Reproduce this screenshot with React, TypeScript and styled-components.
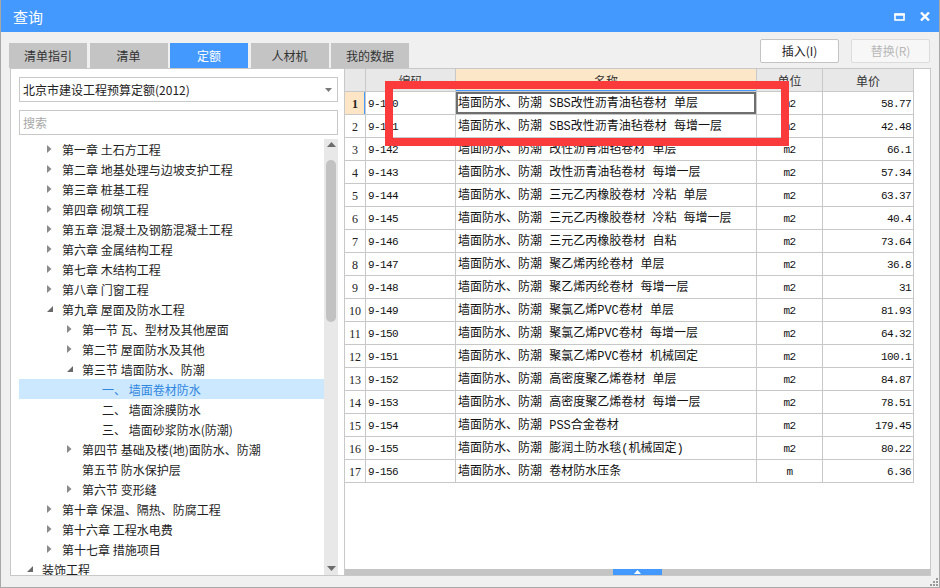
import React from 'react';
import styled, { createGlobalStyle } from 'styled-components';

const UI_FONT = `"Noto Sans CJK SC", "Microsoft YaHei", sans-serif`;
const GRID_FONT = `"Liberation Mono", "Noto Sans CJK SC", monospace`;
const BLUE = '#4499ff';
const LINE = '#c8c8c8';

type TreeNode = { label: string; level: number; state: 'open' | 'closed' | 'leaf'; selected?: boolean };

const treeNodes: TreeNode[] = [
  { label: '第一章 土石方工程', level: 1, state: 'closed' },
  { label: '第二章 地基处理与边坡支护工程', level: 1, state: 'closed' },
  { label: '第三章 桩基工程', level: 1, state: 'closed' },
  { label: '第四章 砌筑工程', level: 1, state: 'closed' },
  { label: '第五章 混凝土及钢筋混凝土工程', level: 1, state: 'closed' },
  { label: '第六章 金属结构工程', level: 1, state: 'closed' },
  { label: '第七章 木结构工程', level: 1, state: 'closed' },
  { label: '第八章 门窗工程', level: 1, state: 'closed' },
  { label: '第九章 屋面及防水工程', level: 1, state: 'open' },
  { label: '第一节 瓦、型材及其他屋面', level: 2, state: 'closed' },
  { label: '第二节 屋面防水及其他', level: 2, state: 'closed' },
  { label: '第三节 墙面防水、防潮', level: 2, state: 'open' },
  { label: '一、 墙面卷材防水', level: 3, state: 'leaf', selected: true },
  { label: '二、 墙面涂膜防水', level: 3, state: 'leaf' },
  { label: '三、 墙面砂浆防水(防潮)', level: 3, state: 'leaf' },
  { label: '第四节 基础及楼(地)面防水、防潮', level: 2, state: 'closed' },
  { label: '第五节 防水保护层', level: 2, state: 'leaf' },
  { label: '第六节 变形缝', level: 2, state: 'closed' },
  { label: '第十章 保温、隔热、防腐工程', level: 1, state: 'closed' },
  { label: '第十六章 工程水电费', level: 1, state: 'closed' },
  { label: '第十七章 措施项目', level: 1, state: 'closed' },
  { label: '装饰工程', level: 0, state: 'open' },
];

const P = '墙面防水、防潮 ';
const rows: [string, string, string, string][] = [
  ['9-140', P + 'SBS改性沥青油毡卷材 单层', 'm2', '58.77'],
  ['9-141', P + 'SBS改性沥青油毡卷材 每增一层', 'm2', '42.48'],
  ['9-142', P + '改性沥青油毡卷材 单层', 'm2', '66.1'],
  ['9-143', P + '改性沥青油毡卷材 每增一层', 'm2', '57.34'],
  ['9-144', P + '三元乙丙橡胶卷材 冷粘 单层', 'm2', '63.37'],
  ['9-145', P + '三元乙丙橡胶卷材 冷粘 每增一层', 'm2', '40.4'],
  ['9-146', P + '三元乙丙橡胶卷材 自粘', 'm2', '73.64'],
  ['9-147', P + '聚乙烯丙纶卷材 单层', 'm2', '36.8'],
  ['9-148', P + '聚乙烯丙纶卷材 每增一层', 'm2', '31'],
  ['9-149', P + '聚氯乙烯PVC卷材 单层', 'm2', '81.93'],
  ['9-150', P + '聚氯乙烯PVC卷材 每增一层', 'm2', '64.32'],
  ['9-151', P + '聚氯乙烯PVC卷材 机械固定', 'm2', '100.1'],
  ['9-152', P + '高密度聚乙烯卷材 单层', 'm2', '84.87'],
  ['9-153', P + '高密度聚乙烯卷材 每增一层', 'm2', '78.51'],
  ['9-154', P + 'PSS合金卷材', 'm2', '179.45'],
  ['9-155', P + '膨润土防水毯(机械固定)', 'm2', '80.22'],
  ['9-156', P + '卷材防水压条', 'm', '6.36'],
];

const tabs = ['清单指引', '清单', '定额', '人材机', '我的数据'];

function App() {
  return (
    <>
      <GlobalStyle />
      <Window>
        <TitleBar>
          <Title>查询</Title>
          <TitleControls>
            <svg width="11" height="8" viewBox="0 0 11 8">
              <rect x="1" y="1.5" width="9" height="5.5" fill="none" stroke="#fff" strokeWidth="1.6" />
              <rect x="0.2" y="0.2" width="10.6" height="2.4" fill="#fff" />
            </svg>
            <svg width="10" height="9" viewBox="0 0 10 9">
              <path d="M1 0.5 L9 8.5 M9 0.5 L1 8.5" stroke="#fff" strokeWidth="2.4" />
            </svg>
          </TitleControls>
        </TitleBar>

        <Toolbar>
          <Tabs>
            {tabs.map((t) => (
              <Tab key={t} $active={t === '定额'}>{t}</Tab>
            ))}
          </Tabs>
          <Actions>
            <ActionButton>插入(I)</ActionButton>
            <ActionButton $disabled>替换(R)</ActionButton>
          </Actions>
        </Toolbar>

        <Main>
          <LeftPanel>
            <SelectBox>
              <span>北京市建设工程预算定额(2012)</span>
              <svg width="7" height="4" viewBox="0 0 7 4">
                <path d="M0 0 H7 L3.5 4 Z" fill="#7a7a7a" />
              </svg>
            </SelectBox>
            <SearchBox>搜索</SearchBox>
            <TreeArea>
              <TreeList>
                {treeNodes.map((n, i) => (
                  <TreeRow key={i} $level={n.level} $selected={n.selected}>
                    <Arrow>
                      {n.state === 'closed' && (
                        <svg width="5" height="8" viewBox="0 0 5 8">
                          <path d="M0 0 L4.5 4 L0 8 Z" fill="#8a8a8a" />
                        </svg>
                      )}
                      {n.state === 'open' && (
                        <svg width="6" height="6" viewBox="0 0 6 6">
                          <path d="M6 0 L6 6 L0 6 Z" fill="#6a6a6a" />
                        </svg>
                      )}
                    </Arrow>
                    <TreeLabel>{n.label}</TreeLabel>
                  </TreeRow>
                ))}
              </TreeList>
              <VScroll>
                <svg width="9" height="5" viewBox="0 0 9 5">
                  <path d="M0 5 L4.5 0 L9 5 Z" fill="#6c6c6c" />
                </svg>
                <VThumb />
                <svg width="9" height="5" viewBox="0 0 9 5">
                  <path d="M0 0 L9 0 L4.5 5 Z" fill="#6c6c6c" />
                </svg>
              </VScroll>
            </TreeArea>
          </LeftPanel>

          <RightPanel>
            <Grid>
              <GridRow>
                <Cell $head />
                <Cell $head $align="center">编码</Cell>
                <Cell $head $align="center" $picked>名称</Cell>
                <Cell $head $align="center">单位</Cell>
                <Cell $head $align="center">单价</Cell>
              </GridRow>
              {rows.map((r, i) => (
                <GridRow key={r[0]}>
                  <NumCell $current={i === 0}>{i + 1}</NumCell>
                  <Cell $mono>{r[0]}</Cell>
                  <Cell $focus={i === 0}>{r[1]}</Cell>
                  <Cell $mono $align="center">{r[2]}</Cell>
                  <Cell $mono $align="right">{r[3]}</Cell>
                </GridRow>
              ))}
            </Grid>
            <HScroll>
              <HThumb>
                <svg width="7" height="4" viewBox="0 0 7 4">
                  <path d="M0 4 L3.5 0 L7 4 Z" fill="#fff" />
                </svg>
              </HThumb>
            </HScroll>
          </RightPanel>
        </Main>

        <StatusStrip>
          <svg width="9" height="9" viewBox="0 0 9 9">
            <rect x="7" y="1" width="2" height="2" fill="#9a9a9a" />
            <rect x="4" y="4" width="2" height="2" fill="#9a9a9a" />
            <rect x="7" y="4" width="2" height="2" fill="#9a9a9a" />
            <rect x="1" y="7" width="2" height="2" fill="#9a9a9a" />
            <rect x="4" y="7" width="2" height="2" fill="#9a9a9a" />
            <rect x="7" y="7" width="2" height="2" fill="#9a9a9a" />
          </svg>
        </StatusStrip>

        <Annotation />
      </Window>
    </>
  );
}

export default App;

const GlobalStyle = createGlobalStyle`
  html, body { margin: 0; padding: 0; background: #f0f0f0; }
  #root { width: 940px; height: 588px; }
  * { box-sizing: border-box; }
`;

const Window = styled.div`
  position: relative;
  width: 940px;
  height: 588px;
  display: flex;
  flex-direction: column;
  background: #f0f0f0;
  border: 1px solid #a8a8a8;
  border-top: none;
  font-family: ${UI_FONT};
  overflow: hidden;
`;

const TitleBar = styled.div`
  height: 32px;
  flex: none;
  background: ${BLUE};
  display: flex;
  align-items: center;
  justify-content: space-between;
  padding: 0 9px 0 12px;
`;

const Title = styled.div`
  color: #fff;
  font-size: 15px;
  line-height: 1;
`;

const TitleControls = styled.div`
  display: flex;
  align-items: center;
  gap: 15px;
  padding-top: 1px;
`;

const Toolbar = styled.div`
  height: 36px;
  flex: none;
  display: flex;
  justify-content: space-between;
  padding: 0 9px 0 8px;
`;

const Tabs = styled.div`
  align-self: flex-end;
  display: flex;
  gap: 2.5px;
`;

const Tab = styled.div<{ $active?: boolean }>`
  width: 78px;
  height: 25px;
  line-height: 25px;
  text-align: center;
  font-size: 12px;
  color: ${(p) => (p.$active ? '#fff' : '#333')};
  background: ${(p) => (p.$active ? BLUE : '#c4c4c4')};
`;

const Actions = styled.div`
  margin-top: 7px;
  display: flex;
  gap: 12px;
`;

const ActionButton = styled.div<{ $disabled?: boolean }>`
  width: 79px;
  height: 24px;
  line-height: 22px;
  text-align: center;
  font-size: 12px;
  border-radius: 2px;
  color: ${(p) => (p.$disabled ? '#b8b8b8' : '#222')};
  background: ${(p) => (p.$disabled ? '#f7f7f7' : '#fff')};
  border: 1px solid ${(p) => (p.$disabled ? '#dcdcdc' : '#c4c4c4')};
`;

const Main = styled.div`
  height: 508px;
  flex: none;
  display: flex;
  padding: 0 8px 0 9px;
`;

const LeftPanel = styled.div`
  width: 334px;
  flex: none;
  display: flex;
  flex-direction: column;
  background: #fff;
  border: 1px solid ${LINE};
  border-right: none;
  padding: 8px 6px 0 8px;
`;

const SelectBox = styled.div`
  height: 25px;
  flex: none;
  display: flex;
  align-items: center;
  justify-content: space-between;
  padding: 0 5px 0 3px;
  border: 1px solid ${LINE};
  font-size: 12px;
  color: #222;
`;

const SearchBox = styled.div`
  height: 25px;
  flex: none;
  margin-top: 8px;
  display: flex;
  align-items: center;
  padding: 0 3px;
  border: 1px solid ${LINE};
  font-size: 12px;
  color: #a8a8a8;
`;

const TreeArea = styled.div`
  flex: 1;
  min-height: 0;
  margin-top: 4px;
  display: flex;
`;

const TreeList = styled.div`
  flex: 1;
  overflow: hidden;
`;

const TreeRow = styled.div<{ $level: number; $selected?: boolean }>`
  height: 20px;
  display: flex;
  align-items: center;
  padding-left: ${(p) => 8 + p.$level * 20}px;
  background: ${(p) => (p.$selected ? '#cce8ff' : 'transparent')};
  color: ${(p) => (p.$selected ? '#2f86e0' : '#1e1e1e')};
`;

const Arrow = styled.div`
  width: 15px;
  flex: none;
  display: flex;
  align-items: center;
  svg { display: block; }
`;

const TreeLabel = styled.span`
  font-size: 12px;
  line-height: 20px;
  padding-top: 1px;
  white-space: pre;
`;

const VScroll = styled.div`
  width: 14px;
  flex: none;
  background: #e8e8e8;
  display: flex;
  flex-direction: column;
  align-items: center;
  justify-content: flex-start;
  padding: 3px 0 4px;
  svg { display: block; flex: none; }
  svg:last-child { margin-top: auto; }
`;

const VThumb = styled.div`
  width: 10px;
  height: 162px;
  margin-top: 13px;
  border-radius: 5px;
  background: #c2c2c2;
`;

const RightPanel = styled.div`
  flex: 1;
  display: flex;
  flex-direction: column;
  background: #fff;
  border: 1px solid ${LINE};
`;

const Grid = styled.div`
  flex: 1;
  overflow: hidden;
`;

const GridRow = styled.div`
  display: grid;
  grid-template-columns: 21px 90px 301px 66px 91px;
  height: 23px;
`;

const Cell = styled.div<{
  $head?: boolean;
  $mono?: boolean;
  $align?: 'left' | 'center' | 'right';
  $picked?: boolean;
  $focus?: boolean;
}>`
  border-right: 1px solid ${LINE};
  border-bottom: 1px solid ${LINE};
  line-height: 20px;
  white-space: pre;
  overflow: hidden;
  color: ${(p) => (p.$head ? '#333' : '#111')};
  text-align: ${(p) => p.$align || 'left'};
  padding: ${(p) => (p.$align === 'right' ? '2px 2px 0 0' : p.$align === 'center' ? '2px 0 0' : '2px 0 0 2px')};
  font-family: ${(p) => (p.$head ? UI_FONT : GRID_FONT)};
  font-size: ${(p) => (p.$mono ? '11px' : '12px')};
  letter-spacing: ${(p) => (p.$mono ? '-0.6px' : '0')};
  background: ${(p) => (p.$picked ? '#fde7c9' : p.$head ? '#e8e8e8' : '#fff')};
  box-shadow: ${(p) =>
    p.$picked ? `inset 0 -1px 0 ${BLUE}` : p.$focus ? 'inset 0 0 0 2px #6e6e6e' : 'none'};
`;

const NumCell = styled.div<{ $current?: boolean }>`
  border-right: 1px solid ${LINE};
  border-bottom: 1px solid ${LINE};
  line-height: 20px;
  padding-top: 2px;
  text-align: center;
  font-family: "Liberation Serif", serif;
  font-size: 12px;
  color: #222;
  font-weight: ${(p) => (p.$current ? 700 : 400)};
  background: ${(p) => (p.$current ? '#fde5c6' : '#fff')};
  box-shadow: ${(p) => (p.$current ? `inset -1px 0 0 ${BLUE}` : 'none')};
`;

const HScroll = styled.div`
  height: 6px;
  flex: none;
  background: #c4c4c4;
  display: flex;
  justify-content: center;
`;

const HThumb = styled.div`
  width: 49px;
  background: ${BLUE};
  display: flex;
  align-items: center;
  justify-content: center;
  svg { display: block; }
`;

const StatusStrip = styled.div`
  flex: 1;
  display: flex;
  justify-content: flex-end;
  align-items: flex-end;
  padding: 0 1px 1px 0;
`;

const Annotation = styled.div`
  position: absolute;
  left: 384px;
  top: 81px;
  width: 404px;
  height: 65px;
  border: 8px solid #fb3b3b;
  pointer-events: none;
`;
